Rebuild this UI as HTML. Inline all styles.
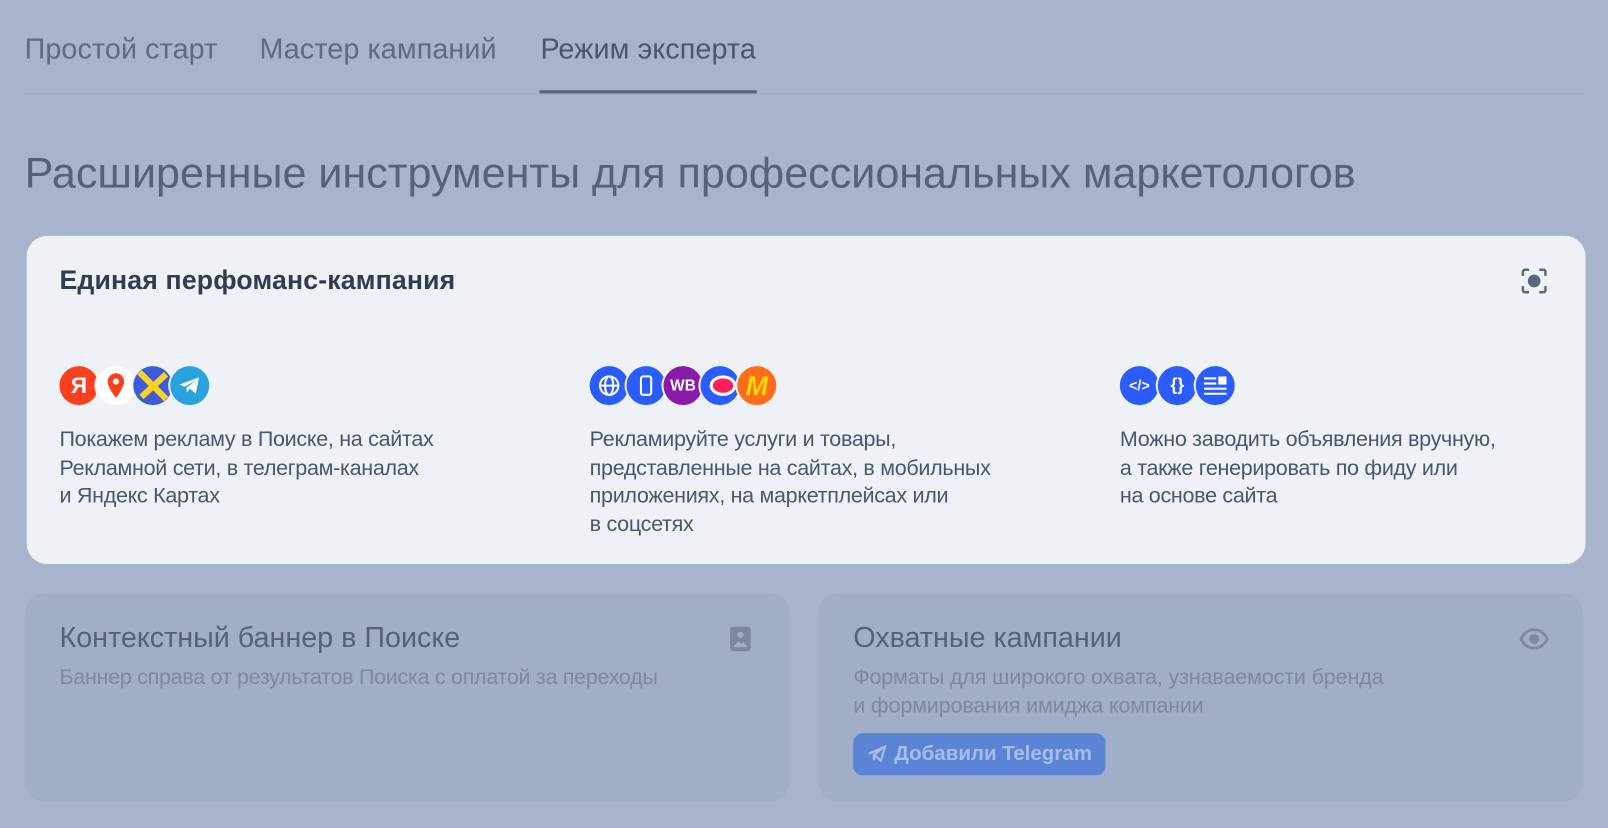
<!DOCTYPE html>
<html><head><meta charset="utf-8"><style>
*{margin:0;padding:0;box-sizing:border-box}
html,body{width:1608px;height:828px;overflow:hidden;background:#a8b4cc}
#w{width:1568px;height:807px;position:relative;transform:scale(1.02551);transform-origin:0 0;font-family:"Liberation Sans",sans-serif;color:#3e4a63}
.abs{position:absolute;white-space:nowrap}
.tab{font-size:28px;color:#5e6b86;top:32px;letter-spacing:0.1px}
.card{position:absolute;border-radius:20px}
.ic{position:absolute;width:38px;height:38px;border-radius:50%;top:357px;display:flex;align-items:center;justify-content:center;color:#fff;font-weight:bold;box-shadow:-2px 0 0 0 #eef2f7}
.desc{font-size:21px;line-height:27.5px;color:#4a5670;letter-spacing:-0.3px;position:absolute;top:415px}
</style></head><body><div id="w">
<div class="abs tab" style="left:24px">Простой старт</div>
<div class="abs tab" style="left:253px">Мастер кампаний</div>
<div class="abs tab" style="left:527px;color:#4a5672">Режим эксперта</div>
<div class="abs" style="left:24px;top:91px;width:1520px;height:1px;background:#9eabc4"></div>
<div class="abs" style="left:526px;top:88px;width:212px;height:3px;background:#56647f"></div>
<div class="abs" style="left:24px;top:145px;font-size:42px;color:#55627e;letter-spacing:0">Расширенные инструменты для профессиональных маркетологов</div>

<div class="card" style="left:26px;top:230px;width:1520px;height:320px;background:#eef2f7"></div>
<div class="abs" style="left:58px;top:258px;font-size:26px;font-weight:bold;color:#333c4f;letter-spacing:0.15px">Единая перфоманс-кампания</div>
<svg class="abs" style="left:1483px;top:261px" width="26" height="26" viewBox="0 0 26 26" fill="none" stroke="#5b6681" stroke-width="2.4"><path d="M2 8V4a2 2 0 0 1 2-2h4M18 2h4a2 2 0 0 1 2 2v4M24 18v4a2 2 0 0 1-2 2h-4M8 24H4a2 2 0 0 1-2-2v-4"/><circle cx="13" cy="13" r="5" fill="#5b6681"/></svg>

<div class="ic" style="left:58px;background:#fc3f1d;font-size:22px;box-shadow:none">Я</div>
<div class="ic" style="left:94px;background:#fff"><svg width="20" height="26" viewBox="0 0 20 26"><path d="M10 1a8 8 0 0 0-8 8c0 6 8 16 8 16s8-10 8-16a8 8 0 0 0-8-8z" fill="#fc3f1d"/><circle cx="10" cy="9" r="3" fill="#fff"/></svg></div>
<div class="ic" style="left:130px;background:#3d5bd6;overflow:hidden"><svg width="38" height="38"><path d="M6 6L32 32M32 8L8 30" stroke="#ffd21e" stroke-width="6"/></svg></div>
<div class="ic" style="left:166px;background:#29a3de"><svg width="22" height="20" viewBox="0 0 22 20"><path d="M1 9L20 2 17 18 11 13 8 17 8 12 17 5 6 11z" fill="#fff"/></svg></div>
<div class="desc" style="left:58px">Покажем рекламу в Поиске, на сайтах<br>Рекламной сети, в телеграм-каналах<br>и Яндекс Картах</div>

<div class="ic" style="left:575px;background:#2b5cff;box-shadow:none"><svg width="22" height="22" viewBox="0 0 22 22" fill="none" stroke="#fff" stroke-width="2"><circle cx="11" cy="11" r="9"/><ellipse cx="11" cy="11" rx="4" ry="9"/><path d="M2 11h18"/></svg></div>
<div class="ic" style="left:611px;background:#2b5cff"><div style="width:12px;height:20px;border:2.5px solid #fff;border-radius:3px"></div></div>
<div class="ic" style="left:647px;background:#8a1aa8;font-size:15px">WB</div>
<div class="ic" style="left:683px;background:#2b5cff;overflow:hidden"><div style="width:26px;height:20px;border-radius:50%;background:#ff1e5a;margin-left:6px;border:3px solid #fff"></div></div>
<div class="ic" style="left:719px;background:#ff6c1a;color:#ffdc00;font-size:26px;font-style:italic">М</div>
<div class="desc" style="left:575px">Рекламируйте услуги и товары,<br>представленные на сайтах, в мобильных<br>приложениях, на маркетплейсах или<br>в соцсетях</div>

<div class="ic" style="left:1092px;background:#2b5cff;font-size:14px;box-shadow:none">&lt;/&gt;</div>
<div class="ic" style="left:1129px;background:#2b5cff;font-size:17px">{}</div>
<div class="ic" style="left:1166px;background:#2b5cff"><svg width="22" height="18" viewBox="0 0 22 18" fill="#fff"><rect x="0" y="1" width="12" height="2"/><rect x="0" y="6" width="12" height="2"/><rect x="14" y="0" width="8" height="8"/><rect x="0" y="11" width="22" height="2"/><rect x="0" y="16" width="22" height="2"/></svg></div>
<div class="desc" style="left:1092px">Можно заводить объявления вручную,<br>а также генерировать по фиду или<br>на основе сайта</div>

<div class="card" style="left:24px;top:578px;width:746px;height:204px;background:#a1aec8"></div>
<div class="abs" style="left:58px;top:606px;font-size:28px;color:#55627d;letter-spacing:0">Контекстный баннер в Поиске</div>
<div class="abs" style="left:58px;top:649px;font-size:21px;color:#7d89a4;letter-spacing:-0.3px">Баннер справа от результатов Поиска с оплатой за переходы</div>
<svg class="abs" style="left:711px;top:610px" width="22" height="26" viewBox="0 0 22 26"><rect x="1" y="1" width="20" height="24" rx="3" fill="#7d89a4"/><circle cx="11" cy="9" r="3" fill="#a1aec8"/><path d="M4 21l5-6 3 3 2-2 4 5z" fill="#a1aec8"/></svg>

<div class="card" style="left:798px;top:578px;width:746px;height:204px;background:#a1aec8"></div>
<div class="abs" style="left:832px;top:606px;font-size:28px;color:#55627d;letter-spacing:0">Охватные кампании</div>
<div class="abs" style="left:832px;top:647px;font-size:21px;line-height:27.5px;color:#7d89a4;letter-spacing:-0.15px">Форматы для широкого охвата, узнаваемости бренда<br>и формирования имиджа компании</div>
<svg class="abs" style="left:1481px;top:612px" width="30" height="22" viewBox="0 0 30 22" fill="none" stroke="#7d89a4" stroke-width="2.6"><path d="M2 11C6 4 10 2 15 2s9 2 13 9c-4 7-8 9-13 9S6 18 2 11z"/><circle cx="15" cy="11" r="3.5" fill="#7d89a4"/></svg>
<div class="abs" style="left:832px;top:715px;width:246px;height:41px;border-radius:9px;background:#5b85d4;color:#a5bde8;font-size:20px;font-weight:bold;line-height:41px;padding-left:40px">Добавили Telegram</div>
<svg class="abs" style="left:845px;top:726px" width="20" height="18" viewBox="0 0 20 18" fill="none" stroke="#a5bde8" stroke-width="2"><path d="M2 9L18 2 14 16 9 11 7 15 7 10 15 4"/></svg>
</div></body></html>
